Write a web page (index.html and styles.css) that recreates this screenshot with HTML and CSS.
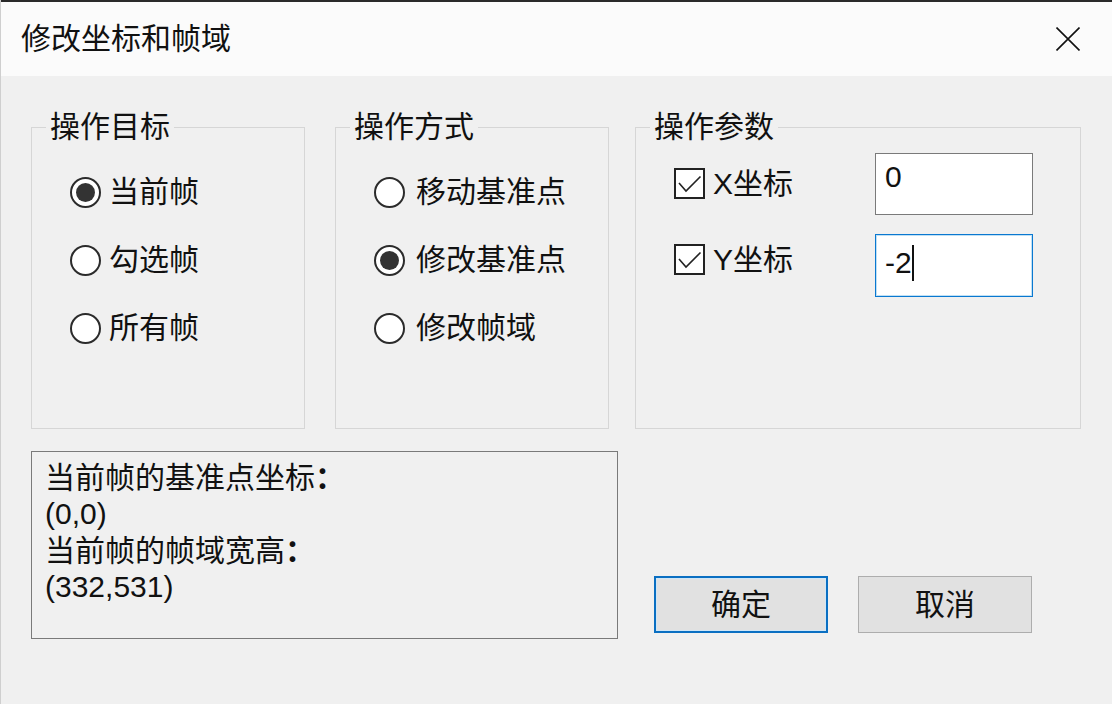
FILE: index.html
```html
<!DOCTYPE html>
<html lang="zh-CN">
<head>
<meta charset="utf-8">
<title>修改坐标和帧域</title>
<link rel="stylesheet" href="styles.css">
</head>
<body>
<div class="dialog">
  <div class="titlebar">
    <span class="title">修改坐标和帧域</span>
    <svg class="close" width="24" height="24" viewBox="0 0 24 24"><path d="M0.5 0.5 L23.5 23.5 M23.5 0.5 L0.5 23.5" stroke="#111" stroke-width="1.6" fill="none"/></svg>
  </div>
  <div class="content">
    <div class="groups">
      <fieldset class="group group-target">
        <legend>操作目标</legend>
        <div class="radios">
          <div class="radio-row"><span class="radio checked"></span><span class="label">当前帧</span></div>
          <div class="radio-row"><span class="radio"></span><span class="label">勾选帧</span></div>
          <div class="radio-row"><span class="radio"></span><span class="label">所有帧</span></div>
        </div>
      </fieldset>
      <fieldset class="group group-mode">
        <legend>操作方式</legend>
        <div class="radios">
          <div class="radio-row"><span class="radio"></span><span class="label">移动基准点</span></div>
          <div class="radio-row"><span class="radio checked"></span><span class="label">修改基准点</span></div>
          <div class="radio-row"><span class="radio"></span><span class="label">修改帧域</span></div>
        </div>
      </fieldset>
      <fieldset class="group group-params">
        <legend>操作参数</legend>
        <div class="params">
          <div class="checks">
            <div class="check-row">
              <span class="checkbox"><svg width="27" height="27" viewBox="0 0 27 27"><path d="M3 13 L10 21 L24.5 6.5" stroke="#222" stroke-width="1.6" fill="none"/></svg></span>
              <span class="label">X坐标</span>
            </div>
            <div class="check-row">
              <span class="checkbox"><svg width="27" height="27" viewBox="0 0 27 27"><path d="M3 13 L10 21 L24.5 6.5" stroke="#222" stroke-width="1.6" fill="none"/></svg></span>
              <span class="label">Y坐标</span>
            </div>
          </div>
          <div class="inputs">
            <div class="textbox">0</div>
            <div class="textbox focused">-2<span class="caret"></span></div>
          </div>
        </div>
      </fieldset>
    </div>
    <div class="bottom">
      <div class="info">
        <div class="info-line">当前帧的基准点坐标<span class="colon">：</span></div>
        <div class="info-line">(0,0)</div>
        <div class="info-line">当前帧的帧域宽高<span class="colon">：</span></div>
        <div class="info-line">(332,531)</div>
      </div>
      <div class="buttons">
        <div class="btn btn-default">确定</div>
        <div class="btn">取消</div>
      </div>
    </div>
  </div>
</div>
</body>
</html>
```
FILE: styles.css
```css
* { box-sizing: border-box; }
html, body {
  margin: 0;
  padding: 0;
  width: 1112px;
  height: 704px;
  overflow: hidden;
  background: #f0f0f0;
}
.dialog {
  width: 1112px;
  height: 704px;
  display: flex;
  flex-direction: column;
  font-family: "Liberation Sans", "Noto Sans CJK SC", sans-serif;
  font-size: 30px;
  color: #000;
  background: #f0f0f0;
  border-left: 1px solid #cfcfcf;
}
.titlebar {
  height: 76px;
  flex: none;
  background: #fbfbfb;
  border-top: 2px solid #2a2a2a;
  display: flex;
  align-items: center;
  justify-content: space-between;
  padding: 0 32px 0 20px;
}
.title {
  font-size: 30px;
  line-height: 36px;
  color: #111;
}
.close { display: block; }

.content {
  flex: 1;
  padding: 35px 0 0 30px;
  display: flex;
  flex-direction: column;
}
.groups {
  display: flex;
  align-items: flex-start;
}
.group {
  margin: 0;
  padding: 0;
  min-width: 0;
  border: 1px solid #d6d6d6;
  height: 318px;
}
.group-target { width: 274px; margin-right: 30px; }
.group-mode { width: 274px; margin-right: 26px; }
.group-params { width: 446px; }
legend {
  margin-left: 14px;
  padding: 0 4px;
  font-size: 30px;
  line-height: 32px;
  color: #111;
}
.radios {
  padding: 15px 0 0 38px;
  display: flex;
  flex-direction: column;
}
.radio-row {
  height: 68px;
  display: flex;
  align-items: center;
}
.radio {
  width: 31px;
  height: 31px;
  flex: none;
  border: 2px solid #2b2b2b;
  border-radius: 50%;
  background: #fff;
  display: flex;
  align-items: center;
  justify-content: center;
}
.radio.checked::after {
  content: "";
  width: 19px;
  height: 19px;
  border-radius: 50%;
  background: #333;
}
.label {
  margin-left: 8px;
  line-height: 36px;
  color: #111;
  white-space: nowrap;
}
.group-mode .label { margin-left: 11px; }

.params {
  display: grid;
  grid-template-columns: 201px 158px;
  padding-left: 38px;
}
.checks {
  padding-top: 25px;
  display: flex;
  flex-direction: column;
  gap: 45px;
}
.check-row {
  height: 31px;
  display: flex;
  align-items: center;
}
.checkbox {
  width: 31px;
  height: 31px;
  flex: none;
  border: 2px solid #222;
  background: #fff;
  display: flex;
}
.checkbox svg { display: block; }
.check-row .label { margin-left: 8px; }
.inputs {
  padding-top: 10px;
  display: flex;
  flex-direction: column;
  gap: 19px;
}
.textbox {
  height: 62px;
  border: 1px solid #7a7a7a;
  background: #fff;
  padding: 5px 0 0 9px;
  line-height: 36px;
  font-size: 30px;
  color: #111;
  display: flex;
  align-items: flex-start;
}
.textbox.focused {
  height: 63px;
  border: 1px solid #0a78d0;
  box-shadow: inset 0 0 0 1px #bfe0f5;
  padding-top: 10px;
}
.caret {
  width: 2px;
  height: 36px;
  background: #111;
}

.bottom {
  margin-top: 22px;
  display: flex;
  align-items: flex-end;
}
.info {
  width: 587px;
  height: 188px;
  border: 1px solid #7a7a7a;
  padding: 6px 0 0 13px;
  flex: none;
}
.info-line {
  line-height: 35.7px;
  font-size: 30px;
  color: #111;
  white-space: nowrap;
}
.colon {
  font-family: "Noto Sans CJK TC", sans-serif;
  font-weight: 700;
}
.buttons {
  display: flex;
  gap: 30px;
  margin-left: 36px;
  margin-bottom: 6px;
}
.btn {
  width: 174px;
  height: 57px;
  background: #e1e1e1;
  border: 1px solid #adadad;
  display: flex;
  align-items: center;
  justify-content: center;
  font-size: 30px;
  line-height: 36px;
  color: #111;
}
.btn-default {
  border: 2px solid #0a6fc2;
  box-shadow: inset 0 0 0 1px #cfe6f7;
}
```
